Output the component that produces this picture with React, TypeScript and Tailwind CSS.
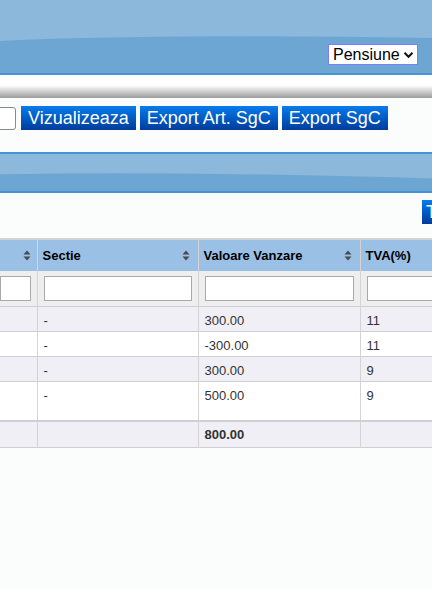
const ROWS = [
  { s: "-", v: "300.00", t: "11", tall: false },
  { s: "-", v: "-300.00", t: "11", tall: false },
  { s: "-", v: "300.00", t: "9", tall: false },
  { s: "-", v: "500.00", t: "9", tall: true },
];

function SortIcon() {
  return (
    <svg width="8" height="11" viewBox="0 0 8 11" className="shrink-0">
      <path d="M4 0.5 L7.5 4.5 H0.5 Z" fill="#4a4a4a" />
      <path d="M4 10.5 L7.5 6.5 H0.5 Z" fill="#4a4a4a" />
    </svg>
  );
}

function Wave({ light, dark, y1, y2 }: { light: string; dark: string; y1: number; y2: number }) {
  // decorative glossy curve of the old-school header bars
  return (
    <svg className="absolute inset-0 h-full w-full" viewBox="0 0 432 100" preserveAspectRatio="none">
      <rect width="432" height="100" fill={light} />
      <path d={`M0 ${y1} Q160 ${y1 - 10} 432 ${y2} V100 H0 Z`} fill={dark} />
    </svg>
  );
}

const btn =
  "h-6 px-[7px] text-[18px] leading-6 text-white bg-gradient-to-b from-[#0a7ced] to-[#003c9c] whitespace-nowrap";

export default function App() {
  return (
    <div className="w-[432px] h-[590px] overflow-hidden bg-[#fbfdfd] font-['Liberation_Sans',Arial,sans-serif]">
      {/* top header */}
      <div className="relative h-[75px] border-b-2 border-[#4795db]">
        <Wave light="#8cb8dc" dark="#6ea6d3" y1={56} y2={52} />
        <div className="relative flex justify-end pt-[44px] pr-[14px]">
          <div className="flex items-center h-[21px] w-[90px] bg-white border border-[#7c7cff] pl-[4px] pr-[3px] text-[16px] text-black">
            <span className="flex-1">Pensiune</span>
            <svg width="11" height="8" viewBox="0 0 11 8">
              <path d="M1.5 1.8 L5.5 5.8 L9.5 1.8" stroke="#111" strokeWidth="2" fill="none" />
            </svg>
          </div>
        </div>
      </div>
      <div className="h-[23px] bg-gradient-to-b from-white from-45% to-[#9d9d9d]" />

      {/* toolbar */}
      <div className="flex items-center gap-1 pt-[8px]">
        <div className="ml-[-44px] mr-[1px] h-[23px] w-[60px] rounded-[3px] border border-[#8a8a8a] bg-white" />
        <button className={btn}>Vizualizeaza</button>
        <button className={btn}>Export Art. SgC</button>
        <button className={btn}>Export SgC</button>
      </div>

      {/* second bar */}
      <div className="relative mt-[22px] h-[41px] border-y-2 border-[#4593d8]">
        <Wave light="#8cb8dc" dark="#6ea6d3" y1={55} y2={66} />
      </div>

      <div className="flex justify-end pt-[7px]">
        <div className="w-[10px] overflow-hidden">
          <button className={btn + " pl-[4px]"}>Totaluri</button>
        </div>
      </div>

      {/* table */}
      <table className="mt-[13px] border-collapse table-fixed w-[520px] text-[13px] text-[#333]">
        <colgroup>
          <col className="w-[37px]" />
          <col className="w-[161px]" />
          <col className="w-[162px]" />
          <col className="w-[160px]" />
        </colgroup>
        <thead>
          <tr className="h-[32px] bg-[#9bc0e6] border-t-2 border-[#d4d4d4]">
            <th className="border-r border-[#d4d4d4] px-[6px]">
              <div className="flex justify-end"><SortIcon /></div>
            </th>
            {["Sectie", "Valoare Vanzare", "TVA(%)"].map((h, i) => (
              <th key={h} className="border-r border-[#d4d4d4] px-[5px] text-left font-bold text-black">
                <div className="flex items-center justify-between">
                  <span>{h}</span>
                  {i < 2 ? <span className="pr-[3px]"><SortIcon /></span> : <span className="w-[400px]" />}
                </div>
              </th>
            ))}
          </tr>
          <tr className="h-[35px] bg-[#eeeeee] border-b border-[#cfcfd4]">
            <td className="border-r border-[#d4d4d4] pr-[6px]">
              <div className="h-[25px] border border-[#a9a9a9] bg-white" />
            </td>
            {[0, 1, 2].map((i) => (
              <td key={i} className="border-r border-[#d4d4d4] px-[6px]">
                <div className="h-[25px] border border-[#a9a9a9] bg-white" />
              </td>
            ))}
          </tr>
        </thead>
        <tbody>
          {ROWS.map((r, i) => (
            <tr
              key={i}
              className={`${r.tall ? "h-[40px]" : "h-[25px]"} ${i % 2 === 0 ? "bg-[#efeff5]" : "bg-white"} border-b border-[#cfcfd4] align-top`}
            >
              <td className="border-r border-[#d4d4d4]" />
              <td className="border-r border-[#d4d4d4] px-[6px] pt-[4px]">{r.s}</td>
              <td className="border-r border-[#d4d4d4] px-[6px] pt-[4px]">{r.v}</td>
              <td className="border-r border-[#d4d4d4] px-[6px] pt-[4px]">{r.t}</td>
            </tr>
          ))}
          <tr className="h-[26px] bg-[#efeff5] border-t-2 border-b border-[#cfcfd4]">
            <td className="border-r border-[#d4d4d4]" />
            <td className="border-r border-[#d4d4d4]" />
            <td className="border-r border-[#d4d4d4] px-[6px] font-bold">800.00</td>
            <td className="border-r border-[#d4d4d4]" />
          </tr>
        </tbody>
      </table>
    </div>
  );
}
